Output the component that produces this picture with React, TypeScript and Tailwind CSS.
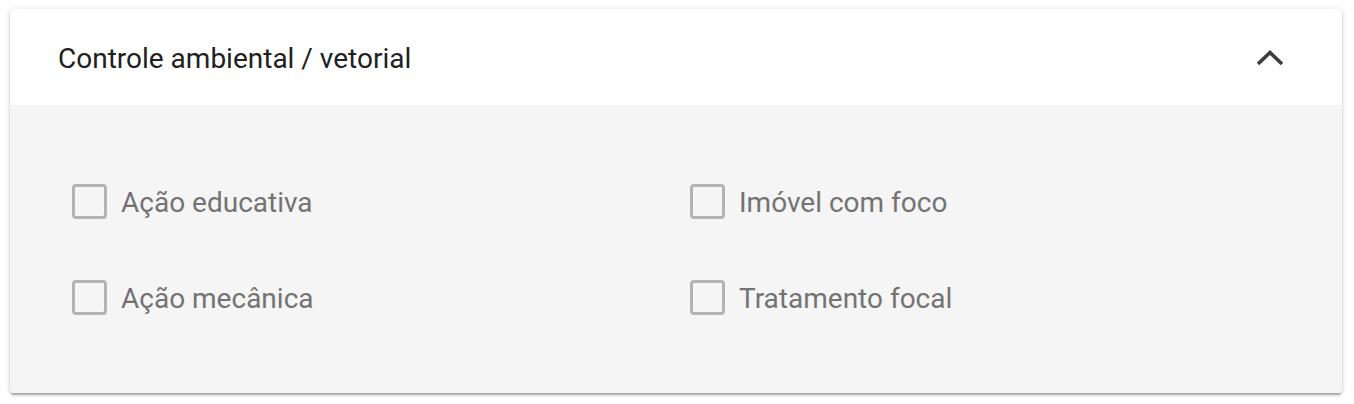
import React from 'react';

const items = ['Ação educativa', 'Imóvel com foco', 'Ação mecânica', 'Tratamento focal'];

function Checkbox({ label }: { label: string }) {
  return (
    <label className="flex h-[48px] items-center gap-[14px] cursor-pointer">
      <span className="block w-[35px] h-[35px] rounded-[4px] border-[3.5px] border-[#b3b3b3]" />
      <span className="mt-[4px] text-[28px] leading-none text-[#737373]">{label}</span>
    </label>
  );
}

export default function App() {
  return (
    <div className="bg-white pt-[9px] pl-[10px] pr-[12px] pb-[11px] font-['Roboto',sans-serif]">
      <div className="rounded-[4px] overflow-hidden bg-white shadow-[0_3px_2px_-1px_rgba(0,0,0,0.2),0_2px_3px_0_rgba(0,0,0,0.14),0_1px_6px_0_rgba(0,0,0,0.12)]">
        {/* Header */}
        <div className="flex h-[96px] items-center justify-between pl-[48px] pr-[58px]">
          <span className="mt-[4px] text-[28px] text-[#212121]">Controle ambiental / vetorial</span>
          <svg width="28" height="18" viewBox="0 0 28 18" className="mt-[2px] text-[#3d3d3d]">
            <polyline points="2,15 14,3.5 26,15" fill="none" stroke="currentColor" strokeWidth="3.6" />
          </svg>
        </div>

        {/* Body */}
        <div className="bg-[#f5f5f5] pt-[72px] pb-[72px] pl-[62px] grid grid-cols-[618px_1fr] gap-y-[48px]">
          {items.map((it) => (
            <Checkbox key={it} label={it} />
          ))}
        </div>
      </div>
    </div>
  );
}
